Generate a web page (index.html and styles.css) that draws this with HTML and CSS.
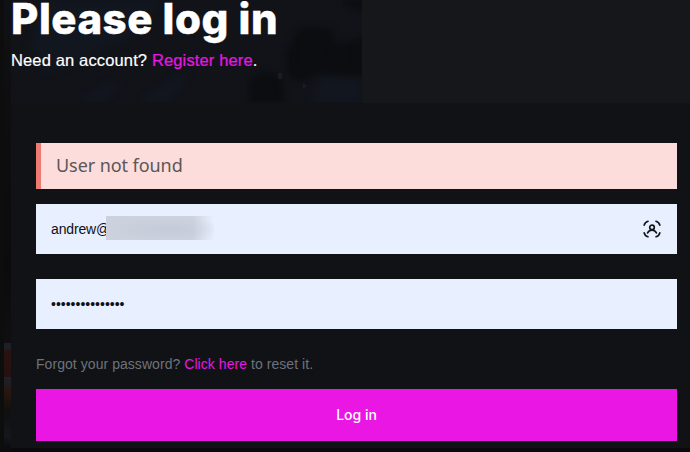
FILE: index.html
```html
<!DOCTYPE html>
<html lang="en">
<head>
<meta charset="utf-8">
<title>Please log in</title>
<link rel="stylesheet" href="styles.css">
</head>
<body>
<div class="page">
  <div class="edge"></div>
  <div class="scene"></div>
  <main class="content">
    <header class="intro">
      <svg class="backdrop" width="351" height="103" viewBox="11 0 351 103" aria-hidden="true">
        <defs><filter id="soft" color-interpolation-filters="sRGB"><feGaussianBlur stdDeviation="3"/></filter></defs>
        <path fill="#111319" d="M11 0h351v103H11z"/>
        <g filter="url(#soft)">
          <path fill="#12161e" d="M42 0h120l-30 38-85 36-18-24zM84 97l25-15 12 3-17 17H84zM144 98l30-22 15-2-18 28h-30zM320 78l12-2 30 5v22h-52z"/>
          <path fill="#0c0d11" d="M286 53l9-19 9-8 27 3 5 14 15-1 16-6v40l-28-1-20-2-15 9-15-4zM342 0h25v11l-19-4zM249 80l15-8 18 4 3 27h-36z"/>
        </g>
        <path fill="#191c25" d="M278 73h4v6h-4zM303 83l4 3-4 3z"/>
        <path stroke="#0b0c10" stroke-width="1.5" fill="none" d="M291 52v16M298 38v30M307 43v25M317 38v26M327 45v17M339 47v18M350 45v20M256 82v18M267 84v17M275 80v20"/>
      </svg>
      <h1>Please log in</h1>
      <p class="register">Need an account? <a>Register here</a>.</p>
    </header>
    <form class="card">
      <div class="alert">User not found</div>
      <div class="field email">
        <span class="value">andrew@</span><span class="redacted"></span>
        <svg class="autofill" width="18" height="18" viewBox="0 0 18 18" fill="none" stroke="#13151b" stroke-width="1.7" stroke-linecap="round">
          <path d="M1.2 5.2Q1.8 2.2 5 1.3M13 1.3Q16.2 2.2 16.8 5.2M1.2 12.8Q1.8 15.8 5 16.7M13 16.7Q16.2 15.8 16.8 12.8"/>
          <circle cx="9" cy="7.4" r="2.3"/>
          <path d="M4.6 12.9Q6.2 10.2 9 10.2T13.4 12.9"/>
        </svg>
      </div>
      <div class="field password"><span class="value">•••••••••••••••</span></div>
      <p class="forgot">Forgot your password? <a>Click here</a> to reset it.</p>
      <button type="button">Log in</button>
    </form>
  </main>
</div>
</body>
</html>
```
FILE: styles.css
```css
* { box-sizing: border-box; }
body { margin: 0; background: #0b090e; font-family: "Liberation Sans", sans-serif; }
.page { display: grid; grid-template-columns: 4px 7px 1fr; height: 452px; }
.edge { background: #0d0d0d; }
.scene { background: linear-gradient(#101114 0, #0e0e10 103px, #0b0b0c 270px, #100e10 343px, #1e2029 343px, #1d1e25 350px, #28130f 350px, #25110f 377px, #202129 377px, #201c22 385px, #2a180e 390px, #1a130e 403px, #100f10 412px, #15171c 436px, #0c0c0e 448px); }
.content { min-width: 0; }
.intro { position: relative; height: 103px; background: #16171b; }
.backdrop { position: absolute; left: 0; top: 0; }
h1, .register { position: relative; margin: 0; color: #fff; white-space: nowrap; }
h1 { font: 800 42px/38px Inter, sans-serif; letter-spacing: 0.5px; -webkit-text-stroke: 0.4px; }
.register { padding-top: 12px; font-size: 16.5px; line-height: 20px; letter-spacing: 0.14px; -webkit-text-stroke: 0.2px; }
a { color: #e916e4; }
.card { height: 345px; padding: 40px 13px 0 25px; background: #111216; }
.alert { height: 46px; padding-left: 15px; border-left: 5px solid #ed7b73; background: #fcdddb; color: #5a5757; font: 18px/45px "Noto Sans", sans-serif; letter-spacing: -0.07px; }
.field { display: flex; align-items: center; height: 50px; padding: 0 15px; background: #e8effe; color: #101116; font-size: 14px; }
.email { margin-top: 15px; }
.email .value { letter-spacing: -0.15px; }
.password { margin-top: 25px; }
.redacted { width: 108px; height: 24px; margin: -2px 0 0 -4px; background: radial-gradient(ellipse at 58% 55%, #bcc2ce77, transparent 65%), linear-gradient(90deg, #cbd1dd, #ccd2df 80%, #e8effe); }
.autofill { margin-left: auto; margin-right: 1px; }
.forgot { margin: 25px 0 0; color: #6d737c; font-size: 14px; line-height: 20px; letter-spacing: 0.055px; }
button { display: block; width: 100%; height: 52px; margin-top: 15px; padding: 0; border: 0; background: #e916e4; color: #fff; font: 500 14px/52px Inter, sans-serif; }
```
